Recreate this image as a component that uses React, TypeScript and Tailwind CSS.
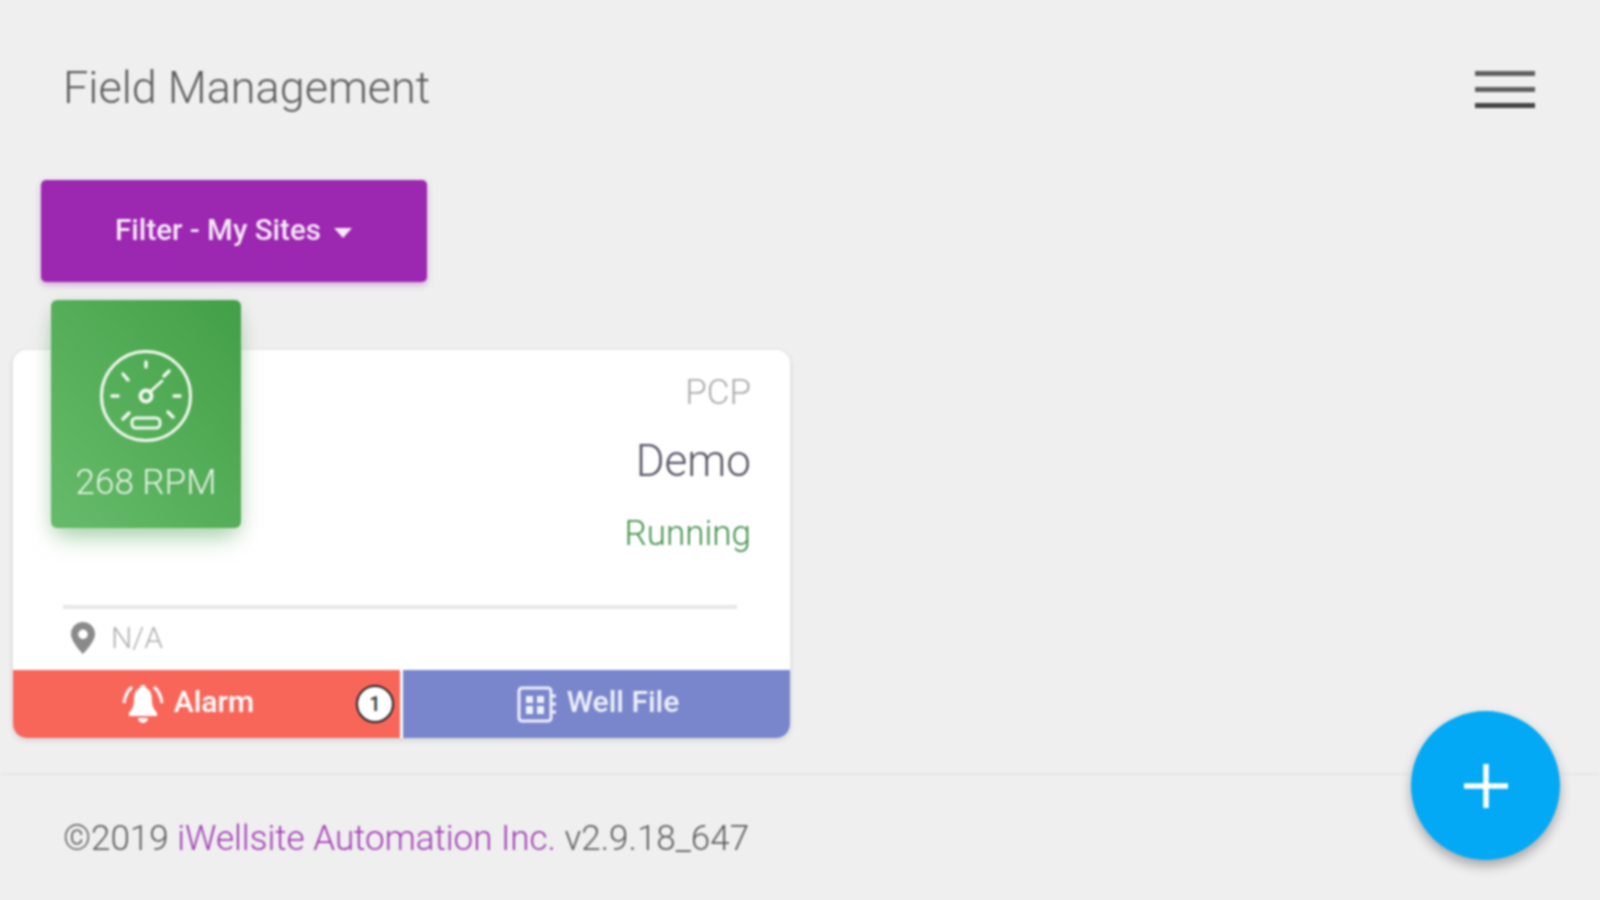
export default function App() {
  return (
    <div className="h-[900px] overflow-hidden bg-[#efefef]">
      <div className="relative flex h-[900px] flex-col font-['Roboto',sans-serif] blur-[1px]">
        {/* Header */}
        <header className="flex h-[180px] items-start justify-between pl-[63px] pr-[65px]">
          <h1 className="mt-[60px] text-[45px] leading-[56px] font-light text-[#5c5c5c]">Field Management</h1>
          <button className="mt-[71px] flex w-[60px] flex-col gap-[11px]">
            <span className="h-[5px] bg-[#606060]" />
            <span className="h-[5px] bg-[#606060]" />
            <span className="h-[5px] bg-[#444444]" />
          </button>
        </header>

        {/* Filter */}
        <div className="pl-[41px]">
          <button className="flex h-[102px] w-[386px] items-center justify-center gap-[12px] rounded-[5px] bg-[#9c27b0] pb-[1px] text-[29.5px] font-medium text-[#f6e9f8] shadow-[0_3px_6px_rgba(156,39,176,0.35)]">
            Filter - My Sites
            <svg width="20" height="12" viewBox="0 0 20 12" className="mt-[4px]">
              <path d="M1 1h18l-9 10z" fill="#f6e9f8" />
            </svg>
          </button>
        </div>

        {/* Card */}
        <div className="relative mt-[68px] ml-[13px] flex h-[388px] w-[777px] flex-col rounded-[14px] bg-white shadow-[0_2px_6px_rgba(0,0,0,0.12)]">
          <div className="absolute top-[-50px] left-[38px] flex h-[228px] w-[190px] flex-col items-center rounded-[6px] bg-gradient-to-tr from-[#66bb6a] to-[#43a047] pt-[49px] text-[#e7f4e8] shadow-[0_14px_24px_-6px_rgba(76,175,80,0.45),0_4px_18px_rgba(0,0,0,0.1)]">
            <svg width="94" height="94" viewBox="0 0 94 94" fill="none" stroke="#f1f8f1" strokeWidth="3" strokeLinecap="round">
              <circle cx="47" cy="47" r="44.5" />
              <circle cx="47" cy="47" r="5.500" strokeWidth="4" />
              <path d="M52 42l11-10" />
              <path d="M47 13v5M24 25l5 6M13 47h6M75 47h6M74 68l-5-5M24 70l6-6M70 22l-5 5" strokeWidth="3.500" />
              <rect x="33" y="69" width="28" height="10" rx="4" />
            </svg>
            <span className="mt-[19px] text-[35px] leading-[42px] font-light">268 RPM</span>
          </div>

          <div className="flex h-[255px] flex-col items-end pr-[39px] pt-[21px]">
            <span className="text-[35px] leading-[44px] font-light text-[#aaaaaa]">PCP</span>
            <span className="mt-[11px] text-[44px] leading-[70px] font-light text-[#555566]">Demo</span>
            <span className="mt-[5px] text-[35px] leading-[66px] font-light text-[#3f8f48]">Running</span>
          </div>
          <div className="mx-[50px] h-[4px] w-[674px] bg-[#e8e8e8]" />
          <div className="flex items-center gap-[16px] pt-[12px] pl-[58px]">
            <svg width="24" height="32" viewBox="0 0 24 32">
              <path fillRule="evenodd" fill="#8a8a8a" d="M12 0C5.400 0 0 5.300 0 12c0 8 12 20 12 20s12-12 12-20C24 5.300 18.600 0 12 0zm0 7.500a4.800 4.800 0 1 1 0 9.600 4.800 4.800 0 0 1 0-9.600z" />
            </svg>
            <span className="text-[30px] leading-[34px] font-light text-[#b0b0b0]">N/A</span>
          </div>

          {/* Card actions */}
          <div className="mt-auto flex h-[68px] gap-[3px] text-[30px] text-white">
            <div className="relative flex w-[387px] items-center justify-center gap-[9px] rounded-bl-[14px] bg-[#f8665a] pr-[38px] font-medium">
              <svg width="44" height="42" viewBox="0 0 44 42" fill="white">
                <path d="M22 2a3 3 0 0 1 3 3c5 2 6 7 6 13 0 6 3 9 5 12v3H8v-3c2-3 5-6 5-12 0-6 1-11 6-13a3 3 0 0 1 3-3z" />
                <path d="M17 35h10a5 5 0 0 1-10 0z" />
                <path d="M11 4C6 8 4 13 3 20M33 4c5 4 7 9 8 16" fill="none" stroke="white" strokeWidth="3" />
              </svg>
              <span className="mb-[5px]">Alarm</span>
              <span className="absolute top-[15px] right-[6px] flex h-[38px] w-[38px] items-center justify-center rounded-full border-2 border-[#222222] bg-white text-[20px] font-medium text-[#333333]">1</span>
            </div>
            <div className="flex flex-1 items-center justify-center gap-[10px] rounded-br-[14px] bg-[#7986cb] pl-[3px] font-medium text-[#eef0fa]">
              <svg width="40" height="38" viewBox="0 0 40 38" fill="none" stroke="#eef0fa" strokeWidth="3">
                <rect x="2" y="3" width="32" height="33" rx="3" />
                <path d="M9 11h7v7H9zM20 11h7v7h-7zM9 21h7v8H9zM20 21h7v8h-7z" fill="#eef0fa" stroke="none" />
                <path d="M35 11h4M35 19h4M35 27h4" />
              </svg>
              <span className="mb-[5px]">Well File</span>
            </div>
          </div>
        </div>

        {/* Footer */}
        <footer className="mt-[35px] flex-1 border-t-2 border-[#e8e8e8] pt-[42px] pl-[63px] text-[35px] leading-[44px] font-light text-[#5c5c5c]">
          ©2019 <span className="text-[#a03ab4]">iWellsite Automation Inc.</span> v2.9.18_647
        </footer>

        {/* Add */}
        <button className="absolute top-[711px] left-[1411px] flex h-[149px] w-[149px] items-center justify-center rounded-full bg-[#03a9f4] shadow-[0_6px_12px_rgba(0,0,0,0.3)]">
          <svg width="44" height="44" viewBox="0 0 44 44" stroke="white" strokeWidth="5.500">
            <path d="M22 0v44M0 22h44" />
          </svg>
        </button>
      </div>
    </div>
  );
}
